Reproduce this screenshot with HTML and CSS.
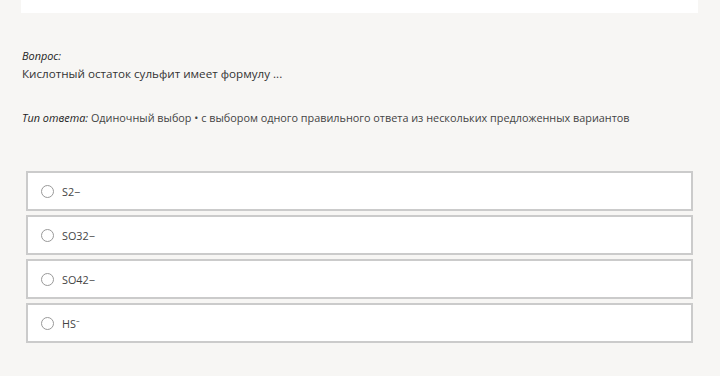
FILE: index.html
```html
<!DOCTYPE html>
<html lang="ru">
<head>
    <meta charset="UTF-8">
    <title>Вопрос</title>
    <link rel="stylesheet" href="styles.css">
</head>
<body>
    <div class="top-card"></div>

    <div class="question">
        <div class="label">Вопрос:</div>
        <div class="text">Кислотный остаток сульфит имеет формулу ...</div>
    </div>

    <div class="answer-type">
        <span class="label">Тип ответа:</span> Одиночный выбор • с выбором одного правильного ответа из нескольких предложенных вариантов
    </div>

    <div class="options">
        <label class="option"><span class="radio"></span><span>S2−</span></label>
        <label class="option"><span class="radio"></span><span>SO32−</span></label>
        <label class="option"><span class="radio"></span><span>SO42−</span></label>
        <label class="option"><span class="radio"></span><span>HS⁻</span></label>
    </div>
</body>
</html>
```

FILE: styles.css
```css
html {
    background-color: #f7f6f4;
}
body {
    margin: 0;
    font-family: "Open Sans", "Noto Sans", sans-serif;
    color: #333;
}
.top-card {
    margin: 0 22px 0 21px;
    height: 13px;
    background: #fff;
}
.question {
    padding: 35px 22px 0;
}
.label {
    font-style: italic;
    font-size: 10.9px;
    color: #222;
}
.question .label {
    line-height: 16px;
}
.question .text {
    font-size: 11.65px;
    line-height: 20px;
    color: #333;
}
.answer-type {
    padding: 26px 22px 0;
    font-size: 10.85px;
    line-height: 16px;
    color: #444;
}
.options {
    margin: 45px 27px 0 26px;
    display: flex;
    flex-direction: column;
    gap: 4px;
}
.option {
    display: flex;
    align-items: center;
    height: 36px;
    padding-left: 13px;
    background: #fff;
    border: 2px solid #cbcbcb;
    font-size: 10.8px;
    color: #444;
}
.radio {
    width: 11px;
    height: 11px;
    border: 1px solid #999;
    border-radius: 50%;
    margin-right: 8px;
    background: #fff;
}
```
